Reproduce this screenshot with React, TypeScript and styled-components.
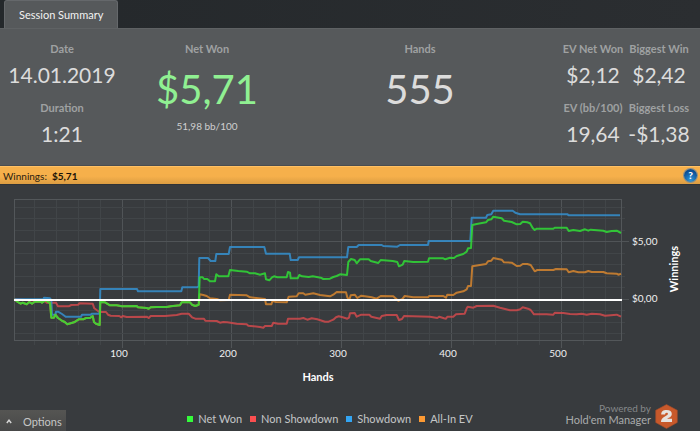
import React from "react";
import styled, { createGlobalStyle } from "styled-components";

const GlobalStyle = createGlobalStyle`
  * { box-sizing: border-box; }
  html, body, #root { margin: 0; min-height: 100vh; }
  body {
    background: #383b3e;
    color: #dcdcdc;
    font-family: Lato, "Open Sans", sans-serif;
    font-size: 11px;
    line-height: 16px;
  }
  button { font: inherit; color: inherit; border: 0; padding: 0; cursor: pointer; }
`;

const Page = styled.div`
  display: flex;
  flex-direction: column;
  min-height: 100vh;
`;

const TabStrip = styled.div`
  display: flex;
  height: 28px;
  padding-left: 4px;
  background: linear-gradient(90deg, #24282b, #2b2e31);
`;

const Tab = styled.button`
  padding: 1px 14px 0;
  border: 1px solid #65686b;
  border-bottom: 0;
  border-radius: 3px 3px 0 0;
  background: #56595b;
  color: #f2f2f2;
`;

const Summary = styled.section`
  display: grid;
  grid-template-columns: 124px 166px minmax(0, 1fr) 76px 74px;
  padding-bottom: 6px;
  border-top: 1px solid #5f6264;
  border-bottom: 1px solid #4a4d50;
  background: #56595b;
`;

const StatColumn = styled.dl<{ $align?: "end" }>`
  display: flex;
  flex-direction: column;
  align-items: center;
  margin: 0;
  padding-top: 12px;
  padding-left: ${(p) => (p.$align ? "10px" : "0")};
  white-space: nowrap;
`;

const LastColumn = styled(StatColumn)`
  padding-right: 8px;
`;

const Stat = styled.div`
  display: flex;
  flex-direction: column;
  align-items: center;
  height: 59px;
`;

const StatLabel = styled.dt`
  color: #9fa1a2;
  font-weight: 700;
`;

const StatValue = styled.dd<{ $size?: "large"; $tone?: string }>`
  margin: 0;
  padding-top: ${(p) => (p.$size ? "8px" : "4px")};
  color: ${(p) => p.$tone ?? "#dcdcdc"};
  font-size: ${(p) => (p.$size ? "40px" : "21px")};
  line-height: ${(p) => (p.$size ? "48px" : "28px")};
`;

const StatNote = styled.dd`
  margin: 5px 0 0;
  color: #cfcfcf;
  font-size: 10px;
`;

const WinningsBar = styled.div`
  display: flex;
  align-items: center;
  height: 18px;
  padding: 0 3px 0 3px;
  background: linear-gradient(#f6b04b 0 55%, #dc9d42);
  border-top: 1px solid #ffc164;
  color: #2b2110;
  font-size: 10px;
`;

const WinningsValue = styled.strong`
  margin-left: 5px;
  color: #1c1408;
`;

const HelpButton = styled.button`
  display: grid;
  place-items: center;
  width: 13px;
  height: 13px;
  margin-left: auto;
  border-radius: 50%;
  background: radial-gradient(circle at 50% 85%, #2f96d8, #0b4f96 70%);
  box-shadow: 0 0 0 1px #8a8f8c;
  color: #fff;
  font-size: 10px;
  font-weight: 900;
  line-height: 13px;
`;

const ChartSection = styled.section`
  border-top: 1px solid #303336;
  padding-top: 5px;
`;

const ChartSvg = styled.svg`
  display: block;
  width: 100%;
  height: auto;
  font-family: Lato, "Open Sans", sans-serif;
  font-size: 10px;
  fill: #f0f0f0;
`;

const Footer = styled.footer`
  display: grid;
  grid-template-columns: minmax(0, 1fr) auto minmax(0, 1fr);
  align-items: end;
  margin-top: auto;
`;

const OptionsButton = styled.button`
  display: flex;
  align-items: center;
  gap: 11px;
  justify-self: start;
  height: 21px;
  padding: 2px 4px 0 6px;
  background: linear-gradient(#555553, #474848);
  color: #c6c6c6;
`;

const Legend = styled.ul`
  display: flex;
  gap: 8px;
  margin: 0;
  padding: 0 40px 4px 0;
  list-style: none;
  color: #c4c6c7;
  white-space: nowrap;
`;

const LegendItem = styled.li<{ $color: string }>`
  display: flex;
  align-items: center;
  gap: 5px;
  &::before {
    content: "";
    width: 6px;
    height: 6px;
    background: ${(p) => p.$color};
  }
`;

const Credit = styled.div`
  display: flex;
  justify-content: flex-end;
  align-items: center;
  gap: 4px;
  padding: 0 22px 2px 0;
  text-align: right;
  white-space: nowrap;
`;

const CreditText = styled.div`
  display: flex;
  flex-direction: column;
  padding-bottom: 4px;
  color: #a9abac;
  line-height: 11px;
`;

const CreditLead = styled.span`
  color: #85888a;
  font-size: 10px;
`;

type Sample = [number, number];

/* Trace samples are stored at three units per chart pixel. */
const samples = (text: string): Sample[] =>
  text.split(" ").map((pair) => pair.split(",").map(Number) as Sample);

const pathOf = (points: Sample[]) =>
  "M" + points.map(([x, y]) => `${(x / 3).toFixed(1)} ${(y / 3).toFixed(1)}`).join("L");

const opening =
  "43,328 53,336 62,341 68,338 80,343 88,336 96,341 104,335 122,335 126,338 138,330 144,336 150,338 154,383 162,383 166,374 174,384 184,391 194,396 202,403 222,397 236,388 250,388 258,384 270,384 278,378 282,396 288,401 299,405 301,336 315,337 330,346 350,346 365,349 410,348 414,352 440,354 446,356 452,352 470,351 500,351 512,349 540,346 545,337 570,337 576,344 586,348 596,344";

const series = [
  {
    name: "Non Showdown",
    color: "#fb4f50",
    line: "#d04a4c",
    data: "43,328 135,334 140,338 168,338 174,349 206,349 214,345 235,344 238,340 278,341 283,355 298,366 318,366 324,374 332,377 358,378 364,382 368,378 380,381 440,380 446,384 452,378 495,378 530,375 545,371 566,371 576,382 586,386 612,386 616,392 650,393 660,398 670,396 682,397 710,401 740,403 745,407 780,411 790,413 795,408 815,408 820,398 834,401 860,401 864,386 900,386 910,384 922,389 935,385 952,388 975,395 986,395 1000,389 1008,382 1016,379 1028,382 1042,386 1047,383 1050,370 1064,369 1070,380 1084,374 1108,374 1114,380 1140,386 1145,378 1160,375 1190,375 1197,390 1206,387 1212,378 1290,380 1312,384 1318,380 1332,385 1338,386 1342,380 1360,380 1368,373 1394,371 1400,355 1403,350 1420,353 1430,348 1480,347 1500,353 1512,356 1530,361 1550,361 1561,358 1568,352 1584,356 1592,360 1602,373 1640,373 1660,374 1664,368 1690,369 1710,372 1730,373 1745,371 1760,374 1775,371 1800,373 1815,377 1850,374 1863,380",
  },
  {
    name: "Showdown",
    color: "#33a5f3",
    line: "#3590cf",
    data: "43,328 130,328 132,323 150,325 154,330 156,374 166,374 168,365 174,365 186,372 197,380 243,380 246,374 272,374 275,371 299,371 301,297 411,297 414,304 544,304 547,292 592,292 596,288 598,204 624,204 632,213 646,213 649,192 686,192 690,171 793,171 798,191 869,191 872,210 893,210 897,202 1041,202 1045,171 1070,171 1076,165 1145,165 1150,168 1192,170 1200,165 1284,165 1286,153 1411,153 1415,83 1458,83 1462,75 1474,73 1480,62 1538,62 1546,68 1560,73 1703,73 1705,76 1860,76",
  },
  {
    name: "All-In EV",
    color: "#fd9a33",
    line: "#d6862f",
    data:
      opening +
      " 599,313 610,315 620,318 630,325 650,327 660,331 686,330 690,314 740,316 750,322 795,327 798,343 814,343 818,332 828,336 860,337 866,320 890,319 896,310 910,310 916,314 940,310 960,315 990,319 1000,314 1010,306 1038,307 1042,322 1048,330 1052,316 1064,314 1072,324 1084,317 1105,320 1115,322 1130,326 1142,318 1180,319 1195,332 1206,328 1214,318 1240,322 1284,322 1287,318 1330,318 1338,323 1342,314 1360,315 1370,308 1390,304 1400,298 1404,288 1413,288 1417,229 1458,222 1464,214 1474,212 1480,204 1505,209 1512,217 1535,218 1550,228 1561,227 1568,222 1582,222 1592,225 1604,244 1612,240 1660,240 1668,237 1700,238 1706,247 1720,243 1735,247 1755,247 1765,243 1775,246 1810,246 1820,250 1850,251 1855,254 1863,251",
  },
  {
    name: "Net Won",
    color: "#34fb3b",
    line: "#30dc36",
    data:
      opening +
      " 599,262 608,262 612,267 622,267 630,274 645,274 649,253 656,259 685,259 690,240 715,243 740,245 750,250 765,250 780,254 795,250 798,268 808,271 816,262 822,259 832,262 860,262 864,246 870,248 872,265 893,265 898,255 906,259 926,261 938,259 962,263 970,267 990,266 1000,261 1010,258 1020,253 1041,255 1045,216 1053,207 1064,210 1070,220 1080,208 1106,208 1112,213 1135,219 1142,210 1178,213 1192,216 1197,229 1208,224 1213,213 1240,216 1284,215 1287,205 1330,205 1336,208 1350,203 1362,204 1370,198 1390,192 1400,185 1404,175 1413,174 1417,105 1430,102 1458,97 1464,90 1474,88 1480,80 1505,85 1512,92 1535,96 1550,103 1561,102 1568,95 1582,97 1590,100 1598,114 1604,120 1610,116 1660,116 1664,113 1700,113 1706,123 1720,120 1740,123 1755,118 1765,122 1772,119 1810,122 1820,126 1835,123 1850,122 1863,129",
  },
];

const legendOrder = ["Net Won", "Non Showdown", "Showdown", "All-In EV"];

const plot = { left: 14, right: 621, top: 9, bottom: 150, zero: 110 };
const handX = (hand: number) => Math.round(11.8 + hand * 1.098);
const moneyY = (value: number) => Math.round(109.5 - value * 11.5);

function WinningsChart() {
  const hands = Array.from({ length: 27 }, (_, i) => (i + 1) * 20);
  const money = Array.from({ length: 12 }, (_, i) => i - 3);
  return (
    <ChartSvg viewBox="0 0 700 200" role="img" aria-label="Winnings by hands played">
      <g fill="none" shapeRendering="crispEdges">
        {hands.map((h) => {
          const major = h % 100 === 0;
          return (
            <path
              key={h}
              stroke={major ? "#505457" : "#414548"}
              d={`M${handX(h) + 0.5} ${plot.top}V${plot.bottom + (major ? 8 : 5)}`}
            />
          );
        })}
        {money.map((m) => {
          const major = m % 5 === 0;
          return (
            <path
              key={m}
              stroke={major ? "#505457" : "#414548"}
              d={`M${plot.left} ${moneyY(m) - 0.5}H${plot.right + (major ? 8 : 4)}`}
            />
          );
        })}
        <path stroke="#53575a" d={`M${plot.left + 0.5} ${plot.top + 0.5}H${plot.right + 0.5}V${plot.bottom + 0.5}H${plot.left + 0.5}Z`} />
      </g>
      <g fill="none" strokeWidth="2" strokeLinejoin="round">
        {series.map((s) => (
          <path key={s.name} stroke={s.line} strokeOpacity="0.85" d={pathOf(samples(s.data))} />
        ))}
      </g>
      <rect x={plot.left} y={plot.zero - 1} width={plot.right - plot.left + 1} height="2" fill="#fff" />
      {[100, 200, 300, 400, 500].map((h) => (
        <text key={h} x={handX(h) - 3} y="167" textAnchor="middle">
          {h}
        </text>
      ))}
      <text x="632" y="55">$5,00</text>
      <text x="632" y="112">$0,00</text>
      <text x="318" y="191" textAnchor="middle" fontWeight="700" fontSize="11" fill="#fff">
        Hands
      </text>
      <text transform="translate(678 79) rotate(-90)" textAnchor="middle" fontWeight="700" fontSize="11" fill="#fff">
        Winnings
      </text>
    </ChartSvg>
  );
}

function BrandMark() {
  return (
    <svg width="23" height="25" viewBox="0 0 23 25" aria-hidden="true">
      <path d="M11.5 0.5L22.3 6.3V18.5L11.5 24.5L0.7 18.5V6.3Z" fill="#c8592b" stroke="#9f4c2b" strokeWidth="0.6" />
      <path
        d="M6.2 10.6C6.2 7.4 8.2 6 11.6 6C15 6 16.8 7.5 16.8 9.9C16.8 11.8 15.6 12.8 13.8 13.8L12 14.8H17V18H6C6 15.4 7.2 14.1 9.5 12.7L11.8 11.3C12.6 10.8 12.9 10.4 12.9 9.8C12.9 9.1 12.4 8.8 11.6 8.8C10.6 8.8 10.1 9.5 10.1 10.6Z"
        fill="#e6e2df"
      />
    </svg>
  );
}

export default function App() {
  return (
    <Page>
      <GlobalStyle />
      <TabStrip role="tablist">
        <Tab type="button" role="tab" aria-selected="true">
          Session Summary
        </Tab>
      </TabStrip>
      <Summary>
        <StatColumn>
          <Stat>
            <StatLabel>Date</StatLabel>
            <StatValue>14.01.2019</StatValue>
          </Stat>
          <Stat>
            <StatLabel>Duration</StatLabel>
            <StatValue>1:21</StatValue>
          </Stat>
        </StatColumn>
        <StatColumn>
          <StatLabel>Net Won</StatLabel>
          <StatValue $size="large" $tone="#90f092">$5,71</StatValue>
          <StatNote>51,98 bb/100</StatNote>
        </StatColumn>
        <StatColumn>
          <StatLabel>Hands</StatLabel>
          <StatValue $size="large">555</StatValue>
        </StatColumn>
        <StatColumn $align="end">
          <Stat>
            <StatLabel>EV Net Won</StatLabel>
            <StatValue>$2,12</StatValue>
          </Stat>
          <Stat>
            <StatLabel>EV (bb/100)</StatLabel>
            <StatValue>19,64</StatValue>
          </Stat>
        </StatColumn>
        <LastColumn>
          <Stat>
            <StatLabel>Biggest Win</StatLabel>
            <StatValue>$2,42</StatValue>
          </Stat>
          <Stat>
            <StatLabel>Biggest Loss</StatLabel>
            <StatValue>-$1,38</StatValue>
          </Stat>
        </LastColumn>
      </Summary>
      <WinningsBar>
        Winnings: <WinningsValue>$5,71</WinningsValue>
        <HelpButton type="button" aria-label="Help">?</HelpButton>
      </WinningsBar>
      <ChartSection>
        <WinningsChart />
      </ChartSection>
      <Footer>
        <OptionsButton type="button">
          <svg width="6" height="5" viewBox="0 0 6 5" aria-hidden="true">
            <path d="M0.8 4L3 1.2L5.2 4" fill="none" stroke="#d6d6d6" strokeWidth="1.4" />
          </svg>
          Options
        </OptionsButton>
        <Legend>
          {legendOrder.map((name) => (
            <LegendItem key={name} $color={series.find((s) => s.name === name)!.color}>
              {name}
            </LegendItem>
          ))}
        </Legend>
        <Credit>
          <CreditText>
            <CreditLead>Powered by</CreditLead>
            <span>Hold'em Manager</span>
          </CreditText>
          <BrandMark />
        </Credit>
      </Footer>
    </Page>
  );
}
